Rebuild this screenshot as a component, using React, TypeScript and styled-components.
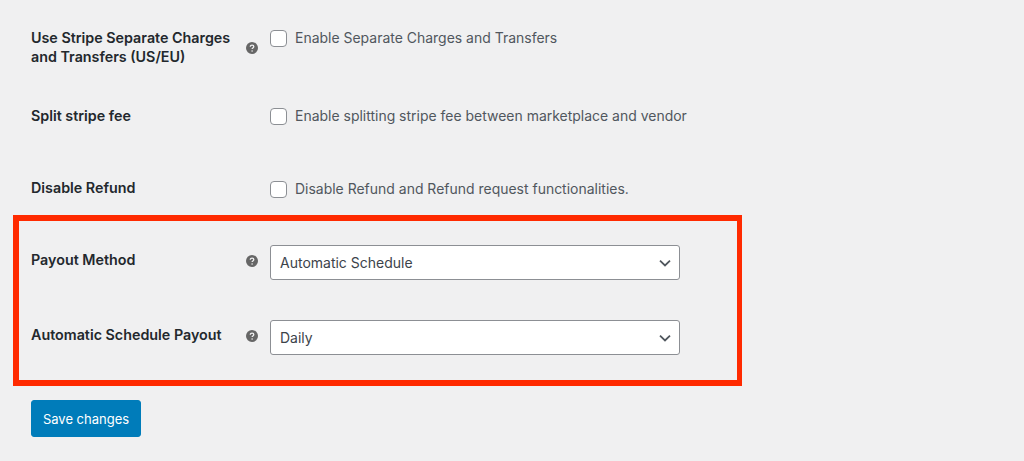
import React from 'react'
import styled, { createGlobalStyle } from 'styled-components'

const GlobalStyle = createGlobalStyle`
  html, body {
    margin: 0;
    padding: 0;
    background: #f0f0f1;
  }
  body {
    font-family: Inter, "Liberation Sans", sans-serif;
    overflow: hidden;
  }
`

const Page = styled.div`
  width: 1024px;
  height: 461px;
  box-sizing: border-box;
  padding: 27px 0 0 31px;
  display: flex;
  flex-direction: column;
  align-items: flex-start;
`

const Row = styled.div<{ $height: number }>`
  display: grid;
  grid-template-columns: 215px 24px 1fr;
  align-items: start;
  height: ${(p) => p.$height}px;
`

const Label = styled.div<{ $top?: number }>`
  margin-top: ${(p) => p.$top ?? 0}px;
  font-size: 14.3px;
  font-weight: 600;
  line-height: 19px;
  color: #23282d;
  width: 212px;
`

const HelpSlot = styled.div<{ $top: number }>`
  margin-top: ${(p) => p.$top}px;
  display: flex;
  color: #666;
`

const CheckLabel = styled.label<{ $top: number }>`
  margin-top: ${(p) => p.$top}px;
  display: flex;
  align-items: center;
  gap: 8px;
  font-size: 13.97px;
  line-height: 18px;
  color: #50575e;
`

const CheckBox = styled.span`
  width: 15px;
  height: 15px;
  background: #fff;
  border: 1px solid #8c8f94;
  border-radius: 4px;
  flex: none;
`

const Highlight = styled.div`
  box-sizing: border-box;
  width: 729px;
  height: 171px;
  margin: 0 0 14px -18px;
  padding: 24px 0 0 12px;
  border-style: solid;
  border-color: #ff2a00;
  border-width: 6px 5px 6px 6px;
  display: flex;
  flex-direction: column;
`

const SelectBox = styled.div`
  box-sizing: border-box;
  width: 410px;
  height: 35px;
  display: flex;
  align-items: center;
  justify-content: space-between;
  padding: 0 7px 0 9px;
  background: #fff;
  border: 1px solid #8c8f94;
  border-radius: 3px;
  font-size: 14px;
  color: #3c434a;
`

const SaveButton = styled.button`
  width: 110px;
  height: 37px;
  padding: 0;
  background: #007cba;
  border: 1px solid #007cba;
  border-radius: 3px;
  color: #fff;
  font-family: inherit;
  font-size: 13px;
`

const Help = () => (
  <svg width="12" height="12" viewBox="0 0 12 12" aria-hidden="true">
    <circle cx="6" cy="6" r="6" fill="currentColor" />
    <path d="M4.3 4.7c0-1 .8-1.6 1.8-1.6s1.7.6 1.7 1.5c0 1.3-1.7 1.3-1.7 2.5" fill="none" stroke="#f0f0f1" strokeWidth="1.3" />
    <circle cx="6.1" cy="9" r=".8" fill="#f0f0f1" />
  </svg>
)

const Chevron = () => (
  <svg width="14" height="14" viewBox="0 0 14 14" aria-hidden="true">
    <path d="M2 4.6 7 9.4l5-4.8" fill="none" stroke="#50575e" strokeWidth="1.8" />
  </svg>
)

const App = () => (
  <>
    <GlobalStyle />
    <Page>
      <Row $height={79}>
        <Label $top={1}>Use Stripe Separate Charges and Transfers (US/EU)</Label>
        <HelpSlot $top={15}>
          <Help />
        </HelpSlot>
        <CheckLabel $top={2}>
          <CheckBox />
          Enable Separate Charges and Transfers
        </CheckLabel>
      </Row>
      <Row $height={72}>
        <Label>Split stripe fee</Label>
        <span />
        <CheckLabel $top={1}>
          <CheckBox />
          Enable splitting stripe fee between marketplace and vendor
        </CheckLabel>
      </Row>
      <Row $height={37}>
        <Label>Disable Refund</Label>
        <span />
        <CheckLabel $top={2}>
          <CheckBox />
          Disable Refund and Refund request functionalities.
        </CheckLabel>
      </Row>
      <Highlight>
        <Row $height={75}>
          <Label $top={5}>Payout Method</Label>
          <HelpSlot $top={10}>
            <Help />
          </HelpSlot>
          <SelectBox>
            Automatic Schedule
            <Chevron />
          </SelectBox>
        </Row>
        <Row $height={35}>
          <Label $top={5}>Automatic Schedule Payout</Label>
          <HelpSlot $top={10}>
            <Help />
          </HelpSlot>
          <SelectBox>
            Daily
            <Chevron />
          </SelectBox>
        </Row>
      </Highlight>
      <SaveButton>Save changes</SaveButton>
    </Page>
  </>
)

export default App
